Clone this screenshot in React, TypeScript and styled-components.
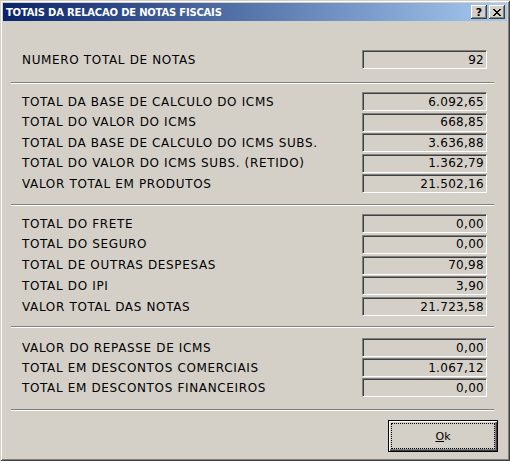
import React from 'react';
import styled, { createGlobalStyle } from 'styled-components';

const Global = createGlobalStyle`
  html, body { margin: 0; padding: 0; background: #D4D0C8; }
  body { font-family: "DejaVu Sans", Verdana, sans-serif; }
`;

const Window = styled.div`
  width: 510px;
  height: 461px;
  box-sizing: border-box;
  padding: 3px;
  background: #D4D0C8;
  box-shadow: inset 1px 1px 0 #D4D0C8, inset -1px -1px 0 #404040,
    inset 2px 2px 0 #FFFFFF, inset -2px -2px 0 #808080;
  display: flex;
  flex-direction: column;
`;

const TitleBar = styled.div`
  height: 18px;
  flex: none;
  display: flex;
  align-items: center;
  padding: 0 2px 0 3px;
  background: linear-gradient(to right, #0A246A, #A6CAF0);
`;

const Title = styled.div`
  flex: 1;
  color: #fff;
  font-family: "DejaVu Sans", Verdana, sans-serif;
  font-weight: bold;
  font-size: 10px;
  letter-spacing: -0.2px;
  white-space: nowrap;
`;

const TitleButtons = styled.div`
  display: flex;
  gap: 2px;
`;

const TitleButton = styled.div`
  width: 16px;
  height: 14px;
  box-sizing: border-box;
  background: #D4D0C8;
  box-shadow: inset -1px -1px 0 #404040, inset 1px 1px 0 #FFFFFF,
    inset -2px -2px 0 #808080;
  display: flex;
  align-items: center;
  justify-content: center;
  font-family: "DejaVu Sans", Verdana, sans-serif;
  font-weight: bold;
  font-size: 11px;
  line-height: 1;
  color: #000;
`;

const Content = styled.div`
  flex: 1;
  display: flex;
  flex-direction: column;
  padding: 29px 9px 0 8px;
`;

const Group = styled.div<{ $gap: number; $mt: number }>`
  display: flex;
  flex-direction: column;
  gap: ${(p) => p.$gap}px;
  margin-top: ${(p) => p.$mt}px;
`;

const Row = styled.div`
  display: flex;
  align-items: center;
  justify-content: space-between;
  height: 19px;
  padding: 0 11px 0 11px;
`;

const Label = styled.span`
  font-size: 12px;
  letter-spacing: 0.65px;
  color: #000;
  white-space: nowrap;
`;

const Field = styled.div`
  width: 125px;
  height: 19px;
  box-sizing: border-box;
  border-style: solid;
  border-width: 1px;
  border-color: #808080 #FFFFFF #FFFFFF #808080;
  box-shadow: inset 1px 1px 0 #404040;
  display: flex;
  align-items: center;
  justify-content: flex-end;
  padding-right: 2px;
  font-size: 12px;
  letter-spacing: 0.3px;
  color: #000;
`;

const Separator = styled.div<{ $mt: number }>`
  height: 0;
  margin: ${(p) => p.$mt}px 4px 0 0;
  border-top: 1px solid #808080;
  border-bottom: 1px solid #FFFFFF;
`;

const Footer = styled.div`
  display: flex;
  justify-content: flex-end;
  margin-top: 9px;
`;

const Button = styled.button`
  position: relative;
  width: 110px;
  height: 32px;
  box-sizing: border-box;
  border: 1px solid #000;
  background: #D4D0C8;
  box-shadow: inset 1px 1px 0 #FFFFFF, inset -1px -1px 0 #404040,
    inset -2px -2px 0 #808080;
  font-family: "DejaVu Sans", Verdana, sans-serif;
  font-size: 11px;
  color: #000;
  padding: 0;
  &::after {
    content: '';
    position: absolute;
    inset: 2px;
    border: 1px dotted #000;
  }
`;

const CloseGlyph = () => (
  <svg width="8" height="7" viewBox="0 0 8 7" shapeRendering="crispEdges">
    <path
      fill="#000"
      d="M0 0h2v1H0zM6 0h2v1H6zM1 1h2v1H1zM5 1h2v1H5zM2 2h4v1H2zM3 3h2v1H3zM2 4h4v1H2zM1 5h2v1H1zM5 5h2v1H5zM0 6h2v1H0zM6 6h2v1H6z"
    />
  </svg>
);

type Item = [string, string];

const groups: { mt: number; gap: number; items: Item[] }[] = [
  {
    mt: 0,
    gap: 0,
    items: [['NUMERO TOTAL DE NOTAS', '92']],
  },
  {
    mt: 8,
    gap: 1.5,
    items: [
      ['TOTAL DA BASE DE CALCULO DO ICMS', '6.092,65'],
      ['TOTAL DO VALOR DO ICMS', '668,85'],
      ['TOTAL DA BASE DE CALCULO DO ICMS SUBS.', '3.636,88'],
      ['TOTAL DO VALOR DO ICMS SUBS. (RETIDO)', '1.362,79'],
      ['VALOR TOTAL EM PRODUTOS', '21.502,16'],
    ],
  },
  {
    mt: 8,
    gap: 1.75,
    items: [
      ['TOTAL DO FRETE', '0,00'],
      ['TOTAL DO SEGURO', '0,00'],
      ['TOTAL DE OUTRAS DESPESAS', '70,98'],
      ['TOTAL DO IPI', '3,90'],
      ['VALOR TOTAL DAS NOTAS', '21.723,58'],
    ],
  },
  {
    mt: 10,
    gap: 1,
    items: [
      ['VALOR DO REPASSE DE ICMS', '0,00'],
      ['TOTAL EM DESCONTOS COMERCIAIS', '1.067,12'],
      ['TOTAL EM DESCONTOS FINANCEIROS', '0,00'],
    ],
  },
];

const sepMargins = [13, 11, 10, 12];

export default function App() {
  return (
    <>
      <Global />
      <Window>
        <TitleBar>
          <Title>TOTAIS DA RELACAO DE NOTAS FISCAIS</Title>
          <TitleButtons>
            <TitleButton>?</TitleButton>
            <TitleButton>
              <CloseGlyph />
            </TitleButton>
          </TitleButtons>
        </TitleBar>
        <Content>
          {groups.map((g, gi) => (
            <React.Fragment key={gi}>
              <Group $gap={g.gap} $mt={g.mt}>
                {g.items.map(([label, value]) => (
                  <Row key={label}>
                    <Label>{label}</Label>
                    <Field>{value}</Field>
                  </Row>
                ))}
              </Group>
              <Separator $mt={sepMargins[gi]} />
            </React.Fragment>
          ))}
          <Footer>
            <Button>
              <u>O</u>k
            </Button>
          </Footer>
        </Content>
      </Window>
    </>
  );
}
